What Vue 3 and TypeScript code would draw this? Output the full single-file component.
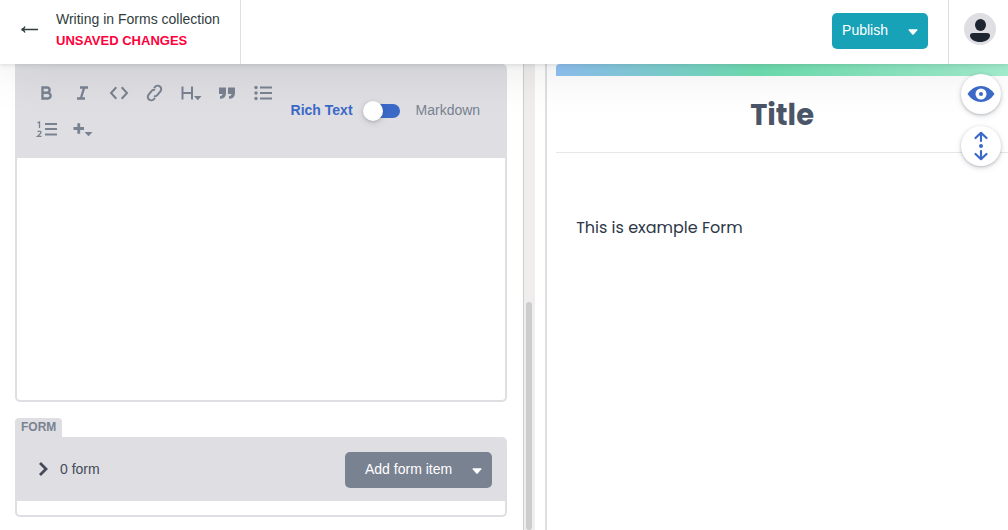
<script setup lang="ts">
import { ref } from 'vue'

type ToolName = 'bold' | 'italic' | 'code' | 'link' | 'heading' | 'quote' | 'bullets' | 'numbers' | 'add'

const tools: { name: ToolName; label: string }[] = [
  { name: 'bold', label: 'Bold' },
  { name: 'italic', label: 'Italic' },
  { name: 'code', label: 'Code' },
  { name: 'link', label: 'Link' },
  { name: 'heading', label: 'Headings' },
  { name: 'quote', label: 'Quote' },
  { name: 'bullets', label: 'Bulleted list' },
  { name: 'numbers', label: 'Numbered list' },
  { name: 'add', label: 'Add component' },
]

const markdownMode = ref(false)
const body = ref('')
const formCount = ref(0)
const expanded = ref(false)
</script>

<template>
  <div class="editor">
    <header class="topbar">
      <a class="back" href="#">
        <svg class="back-arrow" width="20" height="12" viewBox="0 0 20 12" aria-label="Back">
          <path d="M1.500 5.500H18M5 2.500Q4.300 4.800 1.500 5.500Q4.300 6.200 5 8.500" fill="none" stroke="currentColor" stroke-width="1.300" />
        </svg>
        <span class="back-text">
          <span class="collection">Writing in Forms collection</span>
          <strong class="status">UNSAVED CHANGES</strong>
        </span>
      </a>
      <div class="actions">
        <button class="drop publish" type="button">
          <span>Publish</span>
          <svg class="caret" width="10" height="6" viewBox="0 0 10 6" aria-hidden="true"><path d="M1 .3H9Q9.700 .5 9.300 1.200L5.700 5.400Q5 6 4.300 5.400L.7 1.200Q.3 .5 1 .3Z" fill="currentColor" /></svg>
        </button>
      </div>
      <div class="account">
        <button class="avatar" type="button" aria-label="Account">
          <svg width="32" height="32" viewBox="0 0 32 32" aria-hidden="true">
            <ellipse cx="16.500" cy="12" rx="5.500" ry="6" fill="#1c2530" />
            <path d="M9 20H23Q26 20 26 22.500C26 26.500 21 29 16 29S6 26.500 6 22.500Q6 20 9 20Z" fill="#1c2530" />
          </svg>
        </button>
      </div>
    </header>

    <main class="panes">
      <section class="controls">
        <div class="field body-field">
          <div class="toolbar">
            <div class="tools">
              <button v-for="tool in tools" :key="tool.name" class="tool" type="button" :aria-label="tool.label">
                <svg width="24" height="20" viewBox="0 0 24 20" fill="none" stroke="currentColor" stroke-width="2" aria-hidden="true">
                  <path v-if="tool.name === 'bold'" d="M7.500 4.500H12A2.600 2.600 0 0 1 12 9.700H7.500ZM7.500 9.700H12.700A2.900 2.900 0 0 1 12.700 15.500H7.500Z" stroke-width="2.400" />
                  <path v-else-if="tool.name === 'italic'" d="M9 4.500H17M6 15.500H14M13.200 4.500L9.800 15.500" stroke-width="2.300" />
                  <path v-else-if="tool.name === 'code'" d="M9.300 4.300L4 10L9.300 15.700M14.700 4.300L20 10L14.700 15.700" />
                  <g v-else-if="tool.name === 'link'" transform="rotate(-50 11.500 10)" stroke-width="2">
                    <path d="M14 8.500Q13.500 6.500 11 6.500H6.500A3.500 3.500 0 0 0 6.500 13.500H8" />
                    <path d="M9 11.500Q9.500 13.500 12 13.500H16.500A3.500 3.500 0 0 0 16.500 6.500H15" />
                  </g>
                  <g v-else-if="tool.name === 'heading'">
                    <path d="M3.500 3.500V16.500M13 3.500V16.500M3.500 10H13" />
                    <path d="M15 13H22.500L18.750 17.300Z" fill="currentColor" stroke="none" />
                  </g>
                  <path v-else-if="tool.name === 'quote'" d="M4 4.500H11V10Q11 15 6 15.800H5V13.300Q7.500 12.800 7.700 11H4ZM13 4.500H20V10Q20 15 15 15.800H14V13.300Q16.500 12.800 16.700 11H13Z" fill="currentColor" stroke="none" />
                  <g v-else-if="tool.name === 'bullets'">
                    <path d="M9 4.500H21M9 10H21M9 15.500H21" />
                    <g fill="currentColor" stroke="none"><circle cx="5" cy="4.500" r="1.700" /><circle cx="5" cy="10" r="1.700" /><circle cx="5" cy="15.500" r="1.700" /></g>
                  </g>
                  <g v-else-if="tool.name === 'numbers'">
                    <path d="M10 5H22M10 10H22M10 15.500H22" />
                    <path d="M2.500 3.800L4.500 3V9M2.500 12.700Q4.500 11.500 5.800 12.500Q6.500 13.800 4.500 15.500L2.500 17.300H6.500" stroke-width="1.300" />
                  </g>
                  <g v-else>
                    <path d="M2.500 9.500H13M7.750 4.250V14.750" stroke-width="2.800" />
                    <path d="M13.500 13H21.500L17.500 17.300Z" fill="currentColor" stroke="none" />
                  </g>
                </svg>
              </button>
            </div>
            <label class="mode">
              <span :class="{ active: !markdownMode }">Rich Text</span>
              <input v-model="markdownMode" class="switch" type="checkbox" role="switch" />
              <span :class="{ active: markdownMode }">Markdown</span>
            </label>
          </div>
          <textarea v-model="body" class="body-input" aria-label="Body"></textarea>
        </div>

        <div class="field">
          <h2 class="field-label">FORM</h2>
          <div class="list-box">
            <div class="list-head">
              <button class="expander" type="button" :aria-expanded="expanded" @click="expanded = !expanded">
                <svg width="12" height="16" viewBox="0 0 12 16" aria-hidden="true"><path d="M3 2L9 8L3 14" fill="none" stroke="currentColor" stroke-width="2.800" /></svg>
                <span>{{ formCount }} form</span>
              </button>
              <button class="drop add-item" type="button">
                <span>Add form item</span>
                <svg class="caret" width="10" height="6" viewBox="0 0 10 6" aria-hidden="true"><path d="M1 .3H9Q9.700 .5 9.300 1.200L5.700 5.400Q5 6 4.300 5.400L.7 1.200Q.3 .5 1 .3Z" fill="currentColor" /></svg>
              </button>
            </div>
          </div>
        </div>
      </section>

      <div class="scroll-track" aria-hidden="true"><div class="scroll-thumb"></div></div>

      <section class="preview">
        <div class="banner"></div>
        <h1 class="title">Title</h1>
        <p class="copy">This is example Form</p>
      </section>

      <div class="view-controls">
        <button class="round" type="button" aria-label="Toggle preview">
          <svg width="28" height="18" viewBox="0 0 28 18" aria-hidden="true">
            <path fill="currentColor" d="M.5 9Q6 1 14 1T27.500 9Q22 17 14 17T.5 9Z" />
            <circle cx="14" cy="9" r="5.500" fill="#fff" /><circle cx="14" cy="9" r="2" fill="currentColor" />
          </svg>
        </button>
        <button class="round" type="button" aria-label="Sync scrolling">
          <svg width="16" height="30" viewBox="0 0 16 30" fill="none" stroke="currentColor" stroke-width="2.200" stroke-linecap="round" stroke-linejoin="round" aria-hidden="true">
            <path d="M8 10V2M2.500 7L8 1.800L13.500 7M8 20V28M2.500 23L8 28.200L13.500 23" />
            <circle cx="8" cy="15" r="2" fill="currentColor" stroke="none" />
          </svg>
        </button>
      </div>
    </main>
  </div>
</template>

<style>
body {
  margin: 0;
}
</style>

<style scoped>
.editor {
  display: flex;
  flex-direction: column;
  height: 100vh;
  overflow: hidden;
  background: #fff;
  color: #313d3e;
  font-family: "Liberation Sans", Arial, sans-serif;
  font-size: 14px;
}
.editor * {
  box-sizing: border-box;
}
button {
  border: 0;
  padding: 0;
  background: none;
  color: inherit;
  font: inherit;
  cursor: pointer;
}
svg {
  display: block;
  flex: none;
}
.topbar {
  position: relative;
  z-index: 2;
  display: flex;
  flex: none;
  height: 64px;
  background: #fff;
  box-shadow: 0 2px 6px rgba(68, 74, 87, 0.05), 0 1px 3px rgba(68, 74, 87, 0.1), 0 2px 54px rgba(0, 0, 0, 0.1);
}
.back {
  display: flex;
  align-items: center;
  gap: 16px;
  padding: 0 20px 5px;
  border-right: 1px solid #dfdfe3;
  color: #313d3e;
  text-decoration: none;
}
.back-text {
  display: flex;
  flex-direction: column;
  line-height: 21px;
}
.status {
  color: #ff003b;
  font-size: 13px;
  font-weight: 700;
}
.actions {
  display: flex;
  flex: 1;
  justify-content: flex-end;
  align-items: flex-start;
  padding: 13px 20px 0 0;
}
.account {
  padding: 13px 12px 0 15px;
  border-left: 1px solid #dfdfe3;
}
.avatar {
  display: block;
  border-radius: 50%;
  background: #dfdfe3;
}
.drop {
  display: flex;
  align-items: center;
  justify-content: space-between;
  height: 36px;
  border-radius: 5px;
  color: #fff;
}
.publish {
  gap: 20px;
  padding: 0 10px 2px;
  background: #17a2b8;
}
.caret {
  margin-top: 4px;
}
.panes {
  position: relative;
  display: flex;
  flex: 1;
  min-height: 0;
}
.controls {
  flex: 0 0 51.9%;
  padding: 0 16px 0 15px;
}
.toolbar {
  display: flex;
  align-items: center;
  justify-content: space-between;
  padding: 11px 27px 11px 14px;
  border-radius: 0 5px 0 0;
  background: #dfdfe3;
  color: #798291;
}
.tools {
  display: flex;
  flex-wrap: wrap;
  flex: 0 1 254px;
}
.tool {
  display: grid;
  place-items: center;
  width: 36px;
  height: 36px;
}
.mode {
  display: flex;
  align-items: center;
  padding-bottom: 2px;
  white-space: nowrap;
}
.active {
  color: #3a69c7;
  font-weight: 700;
}
.switch {
  appearance: none;
  width: 36px;
  height: 14px;
  margin: 2px 16px 0 11px;
  border-radius: 7px;
  background: #3a69c7;
}
.switch::before {
  content: "";
  display: block;
  width: 20px;
  height: 20px;
  margin: -3px 0 0 -1px;
  border-radius: 50%;
  background: #fff;
  box-shadow: 0 2px 6px rgba(68, 74, 87, 0.2), 0 1px 3px rgba(68, 74, 87, 0.2);
}
.switch:checked::before {
  margin-left: 18px;
}
.body-input {
  display: block;
  width: 100%;
  height: 244px;
  padding: 16px;
  border: 2px solid #dfdfe3;
  border-top: 0;
  border-radius: 0 0 5px 5px;
  outline: 0;
  resize: none;
  font: inherit;
}
.body-field {
  margin-bottom: 16px;
}
.field-label {
  width: max-content;
  margin: 0;
  padding: 0 6px;
  border-radius: 4px 4px 0 0;
  background: #dfdfe3;
  color: #798291;
  font-size: 12px;
  font-weight: 700;
  line-height: 19px;
}
.list-box {
  padding-bottom: 14px;
  border: solid #dfdfe3;
  border-width: 0 2px 2px;
  border-radius: 0 5px 5px 5px;
}
.list-head {
  display: flex;
  align-items: center;
  justify-content: space-between;
  height: 64px;
  padding: 2px 13px 0 20px;
  border-radius: 0 3px 0 0;
  background: #dfdfe3;
}
.expander {
  display: flex;
  align-items: center;
  gap: 11px;
  padding-bottom: 2px;
  color: #444a57;
}
.add-item {
  gap: 20px;
  padding: 0 10px 2px 20px;
  background: #798291;
}
.scroll-track {
  display: flex;
  flex: none;
  align-items: flex-end;
  width: 12px;
  padding: 0 3px 0 2px;
  border-left: 1px solid #cfcfca;
  background: #efeeec;
}
.scroll-thumb {
  width: 6px;
  height: 49%;
  border-radius: 3px;
  background: #cdcdcd;
}
.preview {
  flex: 1;
  margin-left: 10px;
  padding-left: 9px;
  border-left: 2px solid #dfdfe3;
  font-family: Poppins, Inter, sans-serif;
}
.banner {
  height: 12px;
  border-radius: 4px 0 0 0;
  background: linear-gradient(90deg, #90c2f4, #6fe0b2 45%, #a5f0d0);
}
.title {
  margin: 0;
  padding-top: 2px;
  border-bottom: 1px solid #e5e7eb;
  color: #4a5568;
  font-size: 29px;
  font-weight: 700;
  line-height: 74px;
  text-align: center;
}
.copy {
  margin: 63px 20px 0;
  color: #2d3748;
  font-size: 16px;
  line-height: 24px;
}
.view-controls {
  position: absolute;
  z-index: 3;
  top: 10px;
  right: 7px;
  display: grid;
  gap: 12px;
}
.round {
  display: grid;
  place-items: center;
  width: 40px;
  height: 40px;
  border-radius: 50%;
  background: #fff;
  color: #3a69c7;
  box-shadow: 0 2px 6px rgba(68, 74, 87, 0.15), 0 1px 3px rgba(68, 74, 87, 0.3);
}
</style>
